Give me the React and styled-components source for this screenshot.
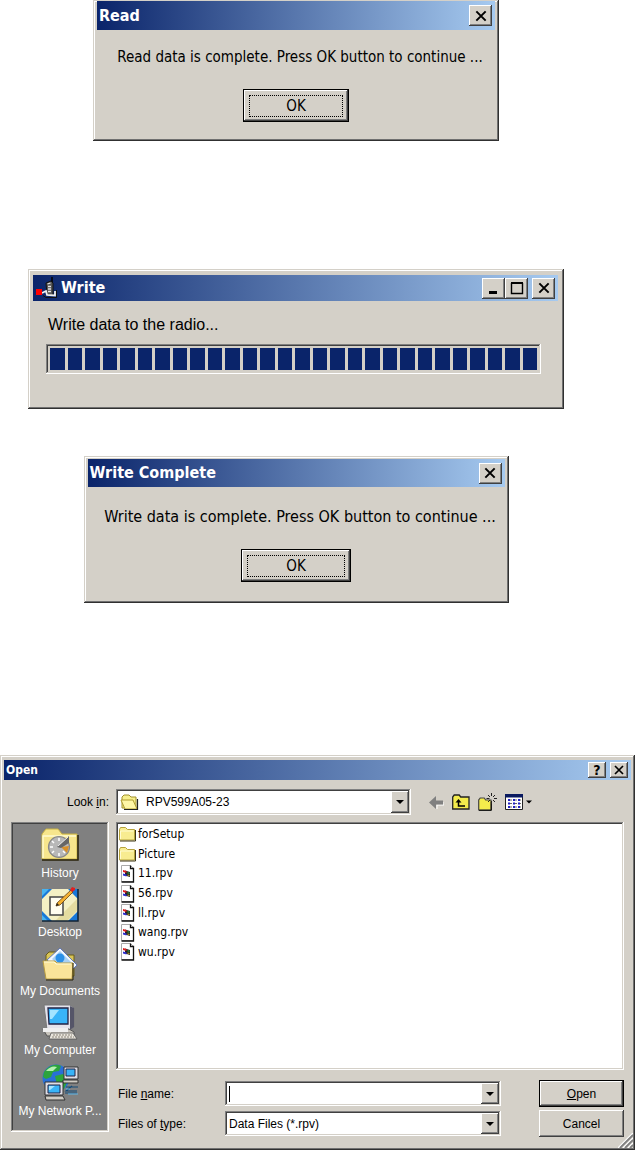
import React from "react";
import styled, { createGlobalStyle, css } from "styled-components";

const face = "#d4d0c8";
const tahoma = '"DejaVu Sans Condensed", "DejaVu Sans", sans-serif';
const sans = '"Liberation Sans", Arial, sans-serif';

const Global = createGlobalStyle`
  *, *::before, *::after { box-sizing: border-box; }
  body { margin: 0; background: #fff; color: #000; font: 12px/20px ${sans}; }
  button, input, select { font: inherit; color: inherit; border-radius: 0; }
`;

const raised = css`
  box-shadow: inset -1px -1px #404040, inset 1px 1px #fff, inset -2px -2px #808080;
`;
const sunken = css`
  box-shadow: inset -1px -1px #fff, inset 1px 1px #808080, inset -2px -2px ${face}, inset 2px 2px #404040;
`;

/* Page */
const Page = styled.main`
  display: flex;
  flex-direction: column;
`;
const Messages = styled.div`
  display: flex;
  flex-direction: column;
  align-items: center;
  padding-right: 43px;
`;

/* Window chrome */
const Window = styled.section`
  width: 100%;
  max-width: ${(p) => p.$max || "none"};
  margin-top: ${(p) => p.$before || "0"};
  padding: ${(p) => p.$frame};
  background: ${face};
  box-shadow: inset -1px -1px #303030, inset 1px 1px ${face}, inset -2px -2px #707070,
    inset 2px 2px #fff;
`;
const TitleBar = styled.header`
  display: flex;
  align-items: center;
  gap: 4px;
  height: ${(p) => p.$height};
  padding: 0 3px 0 2px;
  background: linear-gradient(90deg, #0a246a, #a6caf0);
`;
const Title = styled.h2`
  flex: 1;
  margin: 0;
  color: #fff;
  font: bold ${(p) => (p.$small ? "12px" : "16px")}/20px ${tahoma};
  white-space: nowrap;
`;
const ButtonPair = styled.div`
  display: flex;
`;
const CaptionButton = styled.button`
  display: flex;
  align-items: center;
  justify-content: center;
  width: ${(p) => (p.$small ? "18px" : "23px")};
  height: ${(p) => (p.$small ? "16px" : "21px")};
  padding: 0;
  border: 0;
  background: ${face};
  font: bold 14px/16px ${tahoma};
  ${raised}
`;

/* Message dialogs */
const MessageBody = styled.div`
  display: flex;
  flex-direction: column;
  align-items: center;
  gap: 21px;
  padding: ${(p) => p.$pad};
`;
const Message = styled.p`
  margin: 0;
  padding-left: 8px;
  font: ${(p) => p.$size}/22px ${tahoma};
  white-space: nowrap;
`;
const OkButton = styled.button`
  width: ${(p) => p.$width};
  height: 33px;
  padding: 5px;
  border: 1px solid #000;
  background: ${face};
  font: 15px/20px ${tahoma};
  ${raised}
`;
const FocusRing = styled.span`
  display: block;
  border: 1px dotted #000;
`;

/* Progress window */
const ProgressBody = styled.div`
  padding: 14px 17px 30px 13px;
`;
const ProgressLabel = styled.p`
  margin: 0 2px 9px;
  font-size: 16px;
`;
const Track = styled.div`
  display: flex;
  gap: 3px;
  height: 30px;
  padding: 4px;
  ${sunken}
`;
const Block = styled.span`
  flex: 1;
  background: #0a246a;
`;

/* Open dialog */
const OpenBody = styled.div`
  display: grid;
  grid-template-columns: 98px 1fr;
  grid-template-rows: 26px auto auto;
  column-gap: 7px;
  padding: 9px 7px;
`;
const LookLabel = styled.label`
  justify-self: end;
  align-self: center;
`;
const LookRow = styled.div`
  display: flex;
  align-items: center;
  gap: 18px;
`;
const Combo = styled.div`
  display: flex;
  align-items: center;
  gap: ${(p) => p.$gap || "3px"};
  flex: 1;
  max-width: ${(p) => p.$max || "none"};
  height: ${(p) => p.$height};
  padding: 2px 2px 2px 4px;
  background: #fff;
  ${sunken}
`;
const Select = styled.select`
  flex: 1;
  min-width: 0;
  height: 20px;
  padding: 0;
  border: 0;
  outline: 0;
  background: transparent;
  appearance: none;
`;
const TextInput = styled.input`
  flex: 1;
  min-width: 0;
  height: 20px;
  padding: 0;
  border: 0;
  outline: 0;
  background: transparent;
`;
const Caret = styled.span`
  width: 1px;
  height: 16px;
  background: #000;
`;
const DropButton = styled.button`
  display: flex;
  align-items: center;
  justify-content: center;
  width: 18px;
  height: 100%;
  padding: 0;
  border: 0;
  background: ${face};
  ${raised}
`;
const Tools = styled.div`
  display: flex;
  align-items: center;
  gap: 8px;
`;
const ToolButton = styled.button`
  display: flex;
  padding: 0;
  border: 0;
  background: none;
`;
const Places = styled.nav`
  grid-row: 2 / 4;
  display: flex;
  flex-direction: column;
  margin: 7px 0 5px;
  padding-top: 5px;
  background: #808080;
  ${sunken}
`;
const Place = styled.button`
  display: flex;
  flex-direction: column;
  align-items: center;
  height: 59px;
  padding: 0;
  border: 0;
  background: none;
  color: #fff;
  line-height: 20px;
  white-space: nowrap;
`;
const FileList = styled.ul`
  display: flex;
  flex-direction: column;
  height: 248px;
  margin: 7px 0 0;
  padding: 3px 3px 108px;
  background: #fff;
  list-style: none;
  ${sunken}
`;
const FileItem = styled.li`
  flex: 1;
  display: flex;
  align-items: center;
  gap: 2px;
  font: 12px/19px ${tahoma};
`;
const Fields = styled.div`
  display: grid;
  grid-template-columns: 107px 1fr 85px;
  grid-auto-rows: 27px;
  align-items: center;
  row-gap: 3px;
  margin-top: 10px;
  padding-left: 2px;
`;
const ComboCell = styled.div`
  display: flex;
  margin-right: 38px;
`;
const DialogButton = styled.button`
  height: 27px;
  padding: 0;
  border: ${(p) => (p.$primary ? "1px solid #000" : "0")};
  background: ${face};
  ${raised}
`;
const GripRow = styled.div`
  position: absolute;
  right: 2px;
  bottom: 2px;
  display: flex;
`;
const OpenWindow = styled(Window)`
  position: relative;
`;

/* Icons */
const CloseIcon = ({ size = 12 }) => (
  <svg width={size} height={size} viewBox="0 0 12 12" aria-hidden="true">
    <path d="M2 2l8 8M10 2l-8 8" stroke="#000" strokeWidth="1.700" />
  </svg>
);
const MinimizeIcon = () => (
  <svg width="14" height="14" viewBox="0 0 14 14" aria-hidden="true">
    <path d="M2 10h8v3H2z" />
  </svg>
);
const MaximizeIcon = () => (
  <svg width="14" height="14" viewBox="0 0 14 14" aria-hidden="true">
    <path d="M1 2h12M1.500 2v10.500h11V2" fill="none" stroke="#000" strokeWidth="1.400" />
    <path d="M1 1h12v2H1z" />
  </svg>
);
const DownIcon = () => (
  <svg width="8" height="4" viewBox="0 0 8 4" aria-hidden="true">
    <path d="M0 0h8L4 4z" />
  </svg>
);
const RadioIcon = () => (
  <svg width="22" height="22" viewBox="0 0 22 22" aria-hidden="true">
    <path d="M17 0v6" stroke="#000" strokeWidth="1.500" />
    <path d="M11 6l5-2 2 2v12h-6z" fill="#555" stroke="#111" />
    <path d="M12.500 7l3-1M13 9.500h3M13 12h3M13 14.500h3" stroke="#e4e4e4" strokeWidth="1.300" />
    <path d="M7 16l4-2 1 4 8 .5V14" fill="none" stroke="#f0f0f0" strokeWidth="1.800" />
    <path d="M8 18.500l3 2h10.500V13" fill="none" stroke="#111" />
    <path d="M1 12h6v6H1z" fill="#f00" />
  </svg>
);
const OpenFolderIcon = () => (
  <svg width="20" height="17" viewBox="0 0 20 17" aria-hidden="true">
    <path d="M2 14V3l2-2h5l2 2h5v11z" fill="#f7ef8c" stroke="#a0902c" />
    <path d="M1 6h12l4 9H5z" fill="#fff6a6" stroke="#b09c30" />
    <path d="M4 15.500h13.500V5" fill="none" stroke="#222" strokeWidth="1.200" />
  </svg>
);
const FolderIcon = () => (
  <svg width="17" height="15" viewBox="0 0 17 15" aria-hidden="true">
    <path d="M.5 13V2.500l1-2h5l2 2h7V13z" fill="#f8ec90" stroke="#b5a23c" />
    <path d="M1.500 12V4h13" fill="none" stroke="#fffbd0" />
    <path d="M1 14h15.500V3" fill="none" stroke="#3c3414" />
  </svg>
);
const FileIcon = () => (
  <svg width="17" height="18" viewBox="0 0 17 18" aria-hidden="true">
    <path d="M2.500.5h9l3 3v13h-12z" fill="#fff" stroke="#aaa" />
    <path d="M11.500.5v3h3v13.500h-12" fill="none" stroke="#111" strokeWidth="1.300" />
    <path d="M6 5.500l5 1.500v5L6 10.500z" fill="#222" />
    <path d="M4 5l3.500 1v2L4 7z" fill="#e02020" />
    <path d="M4 8.500l3.500 1v2L4 10.500z" fill="#3030d0" />
    <path d="M8.500 7l2 .5v1.500l-2-.5z" fill="#2a8a3a" />
    <path d="M8.500 9.500l2 .5v1l-2-.5z" fill="#d0b020" />
  </svg>
);
const BackIcon = () => (
  <svg width="15" height="13" viewBox="0 0 15 13" aria-hidden="true">
    <path d="M8 13V9h7V6" fill="none" stroke="#fff" />
    <path d="M0 6.500L7 0v4.500h7v4H7V13z" fill="#808080" />
  </svg>
);
const UpIcon = () => (
  <svg width="18" height="16" viewBox="0 0 18 16" aria-hidden="true">
    <path d="M.7 15V3l1.500-2h5l1.500 2H17v12z" fill="#f4ec4c" stroke="#222" strokeWidth="1.300" />
    <path d="M6.500 7v5H13" fill="none" stroke="#000" strokeWidth="1.500" />
    <path d="M3.500 8.500l3-3.500 3 3.500z" />
  </svg>
);
const NewFolderIcon = () => (
  <svg width="19" height="18" viewBox="0 0 19 18" aria-hidden="true">
    <path d="M.7 17V7l1.500-2h4l1.500 2H13v10z" fill="#f4ec4c" stroke="#444" strokeWidth="1.200" />
    <path d="M1 17.300h12.300V9" fill="none" stroke="#000" />
    <path d="M13.500 0v3M13.500 8v3M8.500 5.500h3M16 5.500h3M10 2l2 2M17 2l-2 2M10 9l2-2M17 9l-2-2" stroke="#222" />
  </svg>
);
const ViewIcon = () => (
  <svg width="27" height="16" viewBox="0 0 27 16" aria-hidden="true">
    <path d="M.5.5h17v15H.5z" fill="#fff" stroke="#222" />
    <path d="M0 0h18v3.500H0z" fill="#0a1a60" />
    <path d="M3 6h2M8 6h2M13 6h2M3 9.500h2M8 9.500h2M13 9.500h2M3 13h2M8 13h2M13 13h2" stroke="#2020c0" strokeWidth="2" />
    <path d="M5 6h2M10 6h2M15 6h1M5 9.500h2M10 9.500h2M15 9.500h1M5 13h2M10 13h2M15 13h1" stroke="#666" />
    <path d="M21 6.500h6l-3 3z" />
  </svg>
);
const HistoryIcon = () => (
  <svg width="38" height="36" viewBox="0 0 38 36" aria-hidden="true">
    <path d="M1 32V7l4-5h12l4 5h15v25z" fill="#f7e68c" stroke="#c9b244" />
    <path d="M2 31V9h33" fill="none" stroke="#fffbd0" strokeWidth="1.500" />
    <path d="M1 33h36V8" fill="none" stroke="#28220a" strokeWidth="1.500" />
    <circle cx="18" cy="20" r="10.500" fill="#b8b8b8" stroke="#888" strokeWidth="1.200" />
    <path d="M18 11v3M9 20h3M11 14l2 2M11 26l2-2M18 26v3M24 26l-2-2" stroke="#fff" strokeWidth="1.500" />
    <path d="M20 20l8-1-2 7z" fill="#d89028" />
    <path d="M16 20L28 9v7l-8 5z" fill="#666" />
    <path d="M17 19l10-9" stroke="#eee" />
  </svg>
);
const DesktopIcon = () => (
  <svg width="38" height="36" viewBox="0 0 38 36" aria-hidden="true">
    <path d="M1 3h36v32H1z" fill="#f4f0c4" />
    <path d="M14 35L37 12v12L26 35z" fill="#e4dca0" />
    <path d="M1 3h10L1 13zM1 35V25l10 10zM37 35V25L27 35zM27 3h10v10z" fill="#1878d8" />
    <path d="M1 3h7L1 10zM1 35v-6l6 6z" fill="#48b4f0" />
    <path d="M1 35h36V3" fill="none" stroke="#123" strokeWidth="1.500" />
    <path d="M9 11h13v18H9z" fill="#fffdf0" stroke="#444" strokeWidth="1.500" />
    <path d="M16 17l14-13 2 2-13 13-4 1z" fill="#f4b030" stroke="#664010" strokeWidth=".8" />
    <path d="M29 4l2-3 3 1v2l-3 2z" fill="#e02020" />
    <path d="M15 20l1-3 2 2z" fill="#222" />
  </svg>
);
const DocumentsIcon = () => (
  <svg width="38" height="36" viewBox="0 0 38 36" aria-hidden="true">
    <path d="M5 31V10l3-3h8l3 3h14v21z" fill="#d8c458" stroke="#6a5c18" />
    <path d="M19 3l17 17-4 4-14 2L6 15z" fill="#f4f8ff" stroke="#6078b8" />
    <path d="M19 6l12 12-12 4-8-8z" fill="#a8d0f4" />
    <circle cx="19" cy="13" r="4.500" fill="#2c90e8" />
    <path d="M2 16h12l2 2h16l-1 16H5z" fill="#fae49a" stroke="#b89c40" />
    <path d="M3 17h10l2 2h15" fill="none" stroke="#fffbd8" />
    <path d="M5 35h27V18" fill="none" stroke="#28220a" />
  </svg>
);
const ComputerIcon = () => (
  <svg width="38" height="36" viewBox="0 0 38 36" aria-hidden="true">
    <path d="M3 1h26l4 3v19l-4 3H6z" fill="#e4e4ec" stroke="#777" />
    <path d="M29 2l4 2v19l-4 3z" fill="#555568" />
    <path d="M7 4h20v16H8z" fill="#38b4f8" stroke="#224" strokeWidth="1.300" />
    <path d="M9 6h9l-7 9H9z" fill="#a4e4ff" />
    <path d="M2 25h26l5 3v4H6z" fill="#c8c4bc" stroke="#555" />
    <path d="M2 24h25v4H2z" fill="#f0f0f0" />
    <path d="M10 29h22l4 6H8z" fill="#e8e4dc" stroke="#555" strokeWidth=".8" />
    <path d="M12 31h19M11 33h22" stroke="#8a8478" strokeDasharray="2 1" />
  </svg>
);
const NetworkIcon = () => (
  <svg width="38" height="38" viewBox="0 0 38 38" aria-hidden="true">
    <circle cx="15" cy="15" r="13.500" fill="#2870d8" />
    <path d="M3 9q8-10 17-6l-2 5-6 1-2 5-5 2-3-2zM14 13l8-2 5 6-4 9-7-4z" fill="#2ca43c" />
    <path d="M5 8q5-6 11-4l-4 4z" fill="#b4f0b0" />
    <path d="M23 4h14v12H23z" fill="#dedee6" stroke="#333" />
    <path d="M25 6h9v7h-9z" fill="#38b4f8" stroke="#224" />
    <path d="M22 17h15v3H22z" fill="#d0ccc4" stroke="#333" />
    <path d="M4 19h18v13H4z" fill="#dedee6" stroke="#333" />
    <path d="M7 22h12v8H7z" fill="#38b4f8" stroke="#224" />
    <path d="M8 23h6l-5 4H8z" fill="#a4e4ff" />
    <path d="M4 33h18l2 4H5z" fill="#d0ccc4" stroke="#333" />
    <path d="M25 24h12M24 30h12M31 23l-6 5h11" fill="none" stroke="#134a78" strokeWidth="1.200" />
    <path d="M25 26h4M27 31h10" stroke="#60b8e8" />
  </svg>
);
const GripIcon = () => (
  <svg width="15" height="15" viewBox="0 0 15 15" aria-hidden="true">
    <path d="M0 15L15 0M5 15L15 5M10 15l5-5" stroke="#fff" strokeWidth="1.300" />
    <path d="M2 15L15 2M7 15l8-8M12 15l3-3" stroke="#808080" strokeWidth="1.800" />
  </svg>
);

const places = [
  ["History", HistoryIcon],
  ["Desktop", DesktopIcon],
  ["My Documents", DocumentsIcon],
  ["My Computer", ComputerIcon],
  ["My Network P...", NetworkIcon],
];
const folders = ["forSetup", "Picture"];
const files = ["11.rpv", "56.rpv", "ll.rpv", "wang.rpv", "wu.rpv"];

function MessageDialog({ title, message, size, titleHeight, okWidth, pad, ...frame }) {
  return (
    <Window role="dialog" aria-label={title} {...frame}>
      <TitleBar $height={titleHeight}>
        <Title>{title}</Title>
        <CaptionButton aria-label="Close">
          <CloseIcon size={14} />
        </CaptionButton>
      </TitleBar>
      <MessageBody $pad={pad}>
        <Message $size={size}>{message}</Message>
        <OkButton $width={okWidth}>
          <FocusRing>OK</FocusRing>
        </OkButton>
      </MessageBody>
    </Window>
  );
}

function ProgressWindow() {
  return (
    <Window $max="536px" $before="128px" $frame="6px 6px 5px 5px" aria-label="Write">
      <TitleBar $height="26px">
        <RadioIcon />
        <Title>Write</Title>
        <ButtonPair>
          <CaptionButton aria-label="Minimize">
            <MinimizeIcon />
          </CaptionButton>
          <CaptionButton aria-label="Maximize">
            <MaximizeIcon />
          </CaptionButton>
        </ButtonPair>
        <CaptionButton aria-label="Close">
          <CloseIcon size={14} />
        </CaptionButton>
      </TitleBar>
      <ProgressBody>
        <ProgressLabel id="write-status">Write data to the radio...</ProgressLabel>
        <Track role="progressbar" aria-valuenow={100} aria-labelledby="write-status">
          {Array.from({ length: 28 }, (_, i) => (
            <Block key={i} />
          ))}
        </Track>
      </ProgressBody>
    </Window>
  );
}

function OpenDialog() {
  return (
    <OpenWindow $before="152px" $frame="5px 4px 4px" role="dialog" aria-label="Open">
      <TitleBar $height="20px">
        <Title $small>Open</Title>
        <CaptionButton $small aria-label="Help">?</CaptionButton>
        <CaptionButton $small aria-label="Close">
          <CloseIcon />
        </CaptionButton>
      </TitleBar>
      <OpenBody>
        <LookLabel htmlFor="look-in">
          Look <u>i</u>n:
        </LookLabel>
        <LookRow>
          <Combo $max="295px" $height="26px" $gap="6px">
            <OpenFolderIcon />
            <Select id="look-in">
              <option>RPV599A05-23</option>
            </Select>
            <DropButton aria-label="Show folders">
              <DownIcon />
            </DropButton>
          </Combo>
          <Tools>
            <ToolButton aria-label="Back"><BackIcon /></ToolButton>
            <ToolButton aria-label="Up one level"><UpIcon /></ToolButton>
            <ToolButton aria-label="New folder"><NewFolderIcon /></ToolButton>
            <ToolButton aria-label="View menu"><ViewIcon /></ToolButton>
          </Tools>
        </LookRow>
        <Places aria-label="Places">
          {places.map(([name, Icon]) => (
            <Place key={name}>
              <Icon />
              {name}
            </Place>
          ))}
        </Places>
        <FileList>
          {folders.map((name) => (
            <FileItem key={name}>
              <FolderIcon />
              {name}
            </FileItem>
          ))}
          {files.map((name) => (
            <FileItem key={name}>
              <FileIcon />
              {name}
            </FileItem>
          ))}
        </FileList>
        <Fields>
          <label htmlFor="file-name">
            File <u>n</u>ame:
          </label>
          <ComboCell>
            <Combo $height="25px">
              <Caret />
              <TextInput id="file-name" type="text" />
              <DropButton aria-label="Recent names">
                <DownIcon />
              </DropButton>
            </Combo>
          </ComboCell>
          <DialogButton $primary>
            <u>O</u>pen
          </DialogButton>
          <label htmlFor="file-type">
            Files of <u>t</u>ype:
          </label>
          <ComboCell>
            <Combo $height="25px">
              <Select id="file-type">
                <option>Data Files (*.rpv)</option>
              </Select>
              <DropButton aria-label="Show types">
                <DownIcon />
              </DropButton>
            </Combo>
          </ComboCell>
          <DialogButton>Cancel</DialogButton>
        </Fields>
      </OpenBody>
      <GripRow>
        <GripIcon />
      </GripRow>
    </OpenWindow>
  );
}

export default function App() {
  return (
    <Page>
      <Global />
      <Messages>
        <MessageDialog
          title="Read"
          message="Read data is complete. Press OK button to continue ..."
          size="15px"
          titleHeight="29px"
          okWidth="106px"
          pad="16px 12px 15px"
          $max="406px"
          $frame="1px 4px 4px"
        />
        <ProgressWindow />
        <MessageDialog
          title="Write Complete"
          message="Write data is complete. Press OK button to continue ..."
          size="16px"
          titleHeight="28px"
          okWidth="110px"
          pad="19px 12px 17px"
          $max="425px"
          $before="47px"
          $frame="3px 4px 4px"
        />
      </Messages>
      <OpenDialog />
    </Page>
  );
}
